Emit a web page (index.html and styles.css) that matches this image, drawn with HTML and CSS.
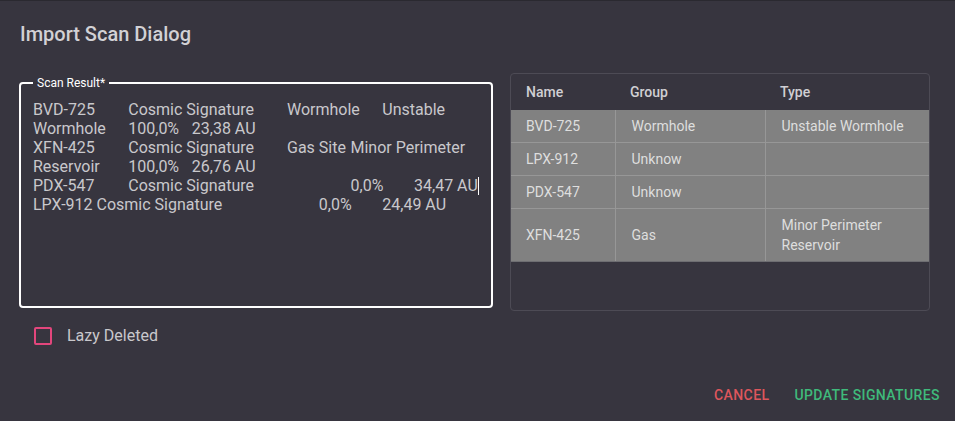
FILE: index.html
```html
<!DOCTYPE html>
<html lang="en">
<head>
<meta charset="utf-8">
<title>Import Scan Dialog</title>
<link rel="stylesheet" href="styles.css">
</head>
<body>
<div class="dialog">
  <h2 class="title">Import Scan Dialog</h2>
  <div class="content">
    <div class="left">
      <fieldset class="scan">
        <legend class="scan-label">Scan Result*</legend>
        <div class="scan-text">BVD-725	Cosmic Signature	Wormhole	Unstable Wormhole	100,0%	23,38 AU
XFN-425	Cosmic Signature	Gas Site	Minor Perimeter Reservoir	100,0%	26,76 AU
PDX-547		Cosmic Signature			0,0%	34,47 AU<span class="caret"></span>
LPX-912	Cosmic Signature			0,0%	24,49 AU</div>
      </fieldset>
      <label class="check">
        <span class="box"></span>
        <span class="check-label">Lazy Deleted</span>
      </label>
    </div>
    <div class="table-wrap">
      <table class="sigs">
        <thead>
          <tr><th class="c1">Name</th><th class="c2">Group</th><th class="c3">Type</th></tr>
        </thead>
        <tbody>
          <tr><td>BVD-725</td><td>Wormhole</td><td>Unstable Wormhole</td></tr>
          <tr><td>LPX-912</td><td>Unknow</td><td></td></tr>
          <tr><td>PDX-547</td><td>Unknow</td><td></td></tr>
          <tr><td>XFN-425</td><td>Gas</td><td>Minor Perimeter Reservoir</td></tr>
        </tbody>
      </table>
    </div>
  </div>
  <div class="actions">
    <button class="btn cancel">Cancel</button>
    <button class="btn update">Update Signatures</button>
  </div>
</div>
</body>
</html>
```
FILE: styles.css
```css
html, body {
  margin: 0;
  padding: 0;
}
body {
  background: #37353f;
  font-family: Roboto, "Noto Sans", sans-serif;
  width: 955px;
  height: 421px;
  overflow: hidden;
}
.dialog {
  border-top: 1px solid #2a2930;
  height: 420px;
  box-sizing: border-box;
  display: flex;
  flex-direction: column;
}
.title {
  margin: 0;
  padding: 17px 20px 0;
  font-size: 20px;
  font-weight: 500;
  line-height: 32px;
  color: #d2d1d5;
}
.content {
  display: flex;
  align-items: flex-start;
  gap: 17px;
  padding: 23px 0 0 19px;
}
.left {
  width: 474px;
  display: flex;
  flex-direction: column;
}
.scan {
  margin: 3px 0 0;
  border: 2px solid #ffffff;
  border-radius: 4px;
  padding: 10px 12px 0;
  height: 232px;
  box-sizing: border-box;
  min-width: 0;
}
.scan-label {
  padding: 0 4px;
  font-size: 12px;
  line-height: 14px;
  color: #ffffff;
}
.scan-text {
  white-space: pre-wrap;
  tab-size: 8;
  font-size: 16px;
  line-height: 19px;
  color: #c9c8cc;
}
.caret {
  display: inline-block;
  width: 1px;
  height: 18px;
  margin-right: -1px;
  background: #ffffff;
  vertical-align: -4px;
}
.check {
  display: flex;
  align-items: center;
  margin: 18px 0 0 15px;
  gap: 15px;
}
.box {
  width: 18px;
  height: 18px;
  box-sizing: border-box;
  border: 2px solid #e2467c;
  border-radius: 2px;
}
.check-label {
  font-size: 16px;
  color: #c9c8cc;
}
.table-wrap {
  width: 420px;
  height: 238px;
  box-sizing: border-box;
  border: 1px solid #4d4b55;
  border-radius: 4px;
  overflow: hidden;
}
.sigs {
  width: 100%;
  border-collapse: collapse;
  table-layout: fixed;
  font-size: 14px;
}
.sigs th {
  height: 36px;
  padding: 0 16px 0 15px;
  text-align: left;
  font-weight: 500;
  color: #d0cfd3;
  vertical-align: middle;
}
.c1 { width: 104px; box-sizing: border-box; }
.c2 { width: 150px; box-sizing: border-box; }
.sigs td {
  background: #818181;
  color: #dedede;
  padding: 6px 16px;
  line-height: 20px;
  height: 20px;
  border-top: 1px solid #979797;
  border-left: 1px solid #979797;
  vertical-align: middle;
}
.sigs td:first-child {
  border-left: none;
  padding-left: 15px;
}
.sigs tbody tr:first-child td {
  border-top: none;
}
.sigs tbody tr:last-child td {
  border-bottom: 1px solid #6e6e72;
}
.actions {
  margin-top: auto;
  display: flex;
  justify-content: flex-end;
  gap: 9px;
  padding: 0 7px 7px 0;
}
.btn {
  background: none;
  border: none;
  font-family: Roboto, "Noto Sans", sans-serif;
  font-size: 14px;
  font-weight: 500;
  letter-spacing: 0.4px;
  text-transform: uppercase;
  line-height: 24px;
  padding: 6px 8px;
  cursor: pointer;
}
.cancel { color: #de565c; }
.update { color: #3fba7b; }
```
